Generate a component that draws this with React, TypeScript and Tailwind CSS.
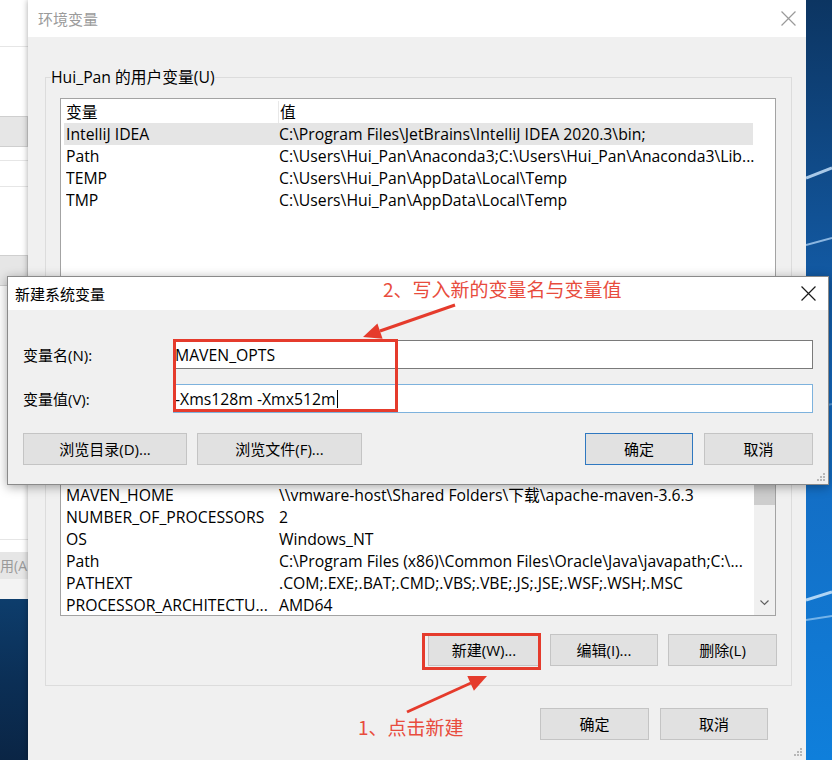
import React from 'react';

const userVars: [string, string][] = [
  ['IntelliJ IDEA', 'C:\\Program Files\\JetBrains\\IntelliJ IDEA 2020.3\\bin;'],
  ['Path', 'C:\\Users\\Hui_Pan\\Anaconda3;C:\\Users\\Hui_Pan\\Anaconda3\\Lib...'],
  ['TEMP', 'C:\\Users\\Hui_Pan\\AppData\\Local\\Temp'],
  ['TMP', 'C:\\Users\\Hui_Pan\\AppData\\Local\\Temp'],
];

const sysVars: [string, string][] = [
  ['ComSpec', 'C:\\Windows\\system32\\cmd.exe'],
  ['DriverData', 'C:\\Windows\\System32\\Drivers\\DriverData'],
  ['JAVA_HOME', 'C:\\Program Files\\Java\\jdk1.8.0_271'],
  ['MAVEN_HOME', '\\\\vmware-host\\Shared Folders\\下载\\apache-maven-3.6.3'],
  ['NUMBER_OF_PROCESSORS', '2'],
  ['OS', 'Windows_NT'],
  ['Path', 'C:\\Program Files (x86)\\Common Files\\Oracle\\Java\\javapath;C:\\...'],
  ['PATHEXT', '.COM;.EXE;.BAT;.CMD;.VBS;.VBE;.JS;.JSE;.WSF;.WSH;.MSC'],
  ['PROCESSOR_ARCHITECTU...', 'AMD64'],
];

function WinButton({ label, w, primary }: { label: string; w: string; primary?: boolean }) {
  return (
    <div
      className={`flex h-[32px] ${w} items-center justify-center whitespace-nowrap border bg-[#e1e1e1] text-[15px] text-black ${
        primary ? 'border-[#2f78c0]' : 'border-[#c4c4c4]'
      }`}
    >
      {label}
    </div>
  );
}

function Grip() {
  return (
    <svg width="10" height="10" viewBox="0 0 10 10" className="text-[#b8b8b8]">
      <rect x="8" y="2" width="2" height="2" fill="currentColor" />
      <rect x="5" y="5" width="2" height="2" fill="currentColor" />
      <rect x="8" y="5" width="2" height="2" fill="currentColor" />
      <rect x="2" y="8" width="2" height="2" fill="currentColor" />
      <rect x="5" y="8" width="2" height="2" fill="currentColor" />
      <rect x="8" y="8" width="2" height="2" fill="currentColor" />
    </svg>
  );
}

function CloseX({ color, size }: { color: string; size: number }) {
  return (
    <svg width={size} height={size} viewBox="0 0 14 14">
      <path d="M0.5 0.5 L13.5 13.5 M13.5 0.5 L0.5 13.5" stroke={color} strokeWidth="1.1" />
    </svg>
  );
}

function VarRow({ name, value, selected }: { name: string; value: string; selected?: boolean }) {
  return (
    <div
      className={`ml-[3px] flex h-[22px] w-[689px] items-center whitespace-nowrap pl-[2px] ${
        selected ? 'bg-[#e5e5e5]' : ''
      }`}
    >
      <div className="w-[213px] shrink-0 overflow-hidden">{name}</div>
      <div>{value}</div>
    </div>
  );
}

function ListHeader() {
  return (
    <div className="ml-[3px] flex h-[22px] w-[689px] items-center pl-[2px]">
      <div className="w-[212px] shrink-0">变量</div>
      <div className="h-full border-l border-[#e8e8e8] pl-[1px] leading-[22px]">值</div>
    </div>
  );
}

export default function App() {
  return (
    <div className="relative flex h-[760px] w-[832px] overflow-hidden font-['Open_Sans','Noto_Sans_CJK_SC',sans-serif] text-[15.75px] leading-[22px] text-black">
      {/* window behind, left strip */}
      <div className="flex w-[28px] shrink-0 flex-col bg-white text-[#9a9a9a]">
        <div className="h-[47px] border-b border-[#e6e6e6]" />
        <div className="h-[69px]" />
        <div className="h-[31px] border border-l-0 border-[#cfcfcf] bg-[#e6e6e6]" />
        <div className="h-[14px] border-b border-[#e6e6e6]" />
        <div className="h-[26px] border-b border-[#e6e6e6]" />
        <div className="h-[68px]" />
        <div className="h-[31px] border border-l-0 border-[#cfcfcf] bg-[#e6e6e6]" />
        <div className="h-[254px] border-b border-[#e6e6e6]" />
        <div className="h-[12px]" />
        <div className="flex h-[27px] items-center overflow-hidden whitespace-nowrap bg-[#e6e6e6] text-[14px]">
          用(A
        </div>
        <div className="h-[20px] bg-[#f3f3f3]" />
        <div className="flex-1 bg-gradient-to-b from-[#0d3d6c] via-[#0b2f56] to-[#0a2545]" />
      </div>

      {/* 环境变量 window */}
      <div className="relative flex w-[778px] shrink-0 flex-col bg-[#f0f0f0] shadow-[0_0_6px_rgba(0,0,0,0.35)]">
        <div className="flex h-[37px] shrink-0 items-center justify-between bg-white pl-[10px] pr-[10px]">
          <span className="text-[15px] text-[#9b9b9b]">环境变量</span>
          <CloseX color="#9a9a9a" size={15} />
        </div>

        <div className="flex flex-col pl-[17px] pt-[30px]">
          <fieldset className="w-[747px] border border-[#dcdcdc]">
            <legend className="ml-[5px] leading-[20px]">Hui_Pan 的用户变量(U)</legend>
            <div className="px-[14px] pb-[12px] pt-[11px]">
              <div className="h-[190px] w-[716px] border border-[#a3a3a3] bg-white pt-[2px]">
                <ListHeader />
                {userVars.map(([n, v], i) => (
                  <VarRow key={n} name={n} value={v} selected={i === 0} />
                ))}
              </div>
              <div className="mt-[12px] flex justify-end gap-[10px]">
                <WinButton label="新建(N)..." w="w-[112px]" />
                <WinButton label="编辑(E)..." w="w-[108px]" />
                <WinButton label="删除(D)" w="w-[109px]" />
              </div>
            </div>
          </fieldset>

          <fieldset className="mt-[16px] w-[747px] border border-[#dcdcdc]">
            <legend className="ml-[5px] leading-[20px]">系统变量(S)</legend>
            <div className="px-[14px] pb-[19px] pt-[11px]">
              <div className="flex h-[224px] w-[716px] border border-[#a3a3a3] bg-white">
                <div className="flex-1 overflow-hidden pt-[3px]">
                  <ListHeader />
                  {sysVars.map(([n, v]) => (
                    <VarRow key={n} name={n} value={v} />
                  ))}
                </div>
                <div className="flex w-[21px] flex-col bg-[#f0f0f0]">
                  <div className="h-[17px]" />
                  <div className="h-[95px] bg-[#cdcdcd]" />
                  <div className="flex-1" />
                  <div className="flex h-[24px] items-center justify-center">
                    <svg width="9" height="6" viewBox="0 0 9 6">
                      <path d="M0.5 0.5 L4.5 4.5 L8.5 0.5" fill="none" stroke="#606060" strokeWidth="1.2" />
                    </svg>
                  </div>
                </div>
              </div>
              <div className="mt-[18px] flex justify-end gap-[10px]">
                <WinButton label="新建(W)..." w="w-[112px]" />
                <WinButton label="编辑(I)..." w="w-[108px]" />
                <WinButton label="删除(L)" w="w-[109px]" />
              </div>
            </div>
          </fieldset>

          <div className="mt-[22px] flex w-[723px] justify-end gap-[11px]">
            <WinButton label="确定" w="w-[109px]" />
            <WinButton label="取消" w="w-[108px]" />
          </div>
        </div>
        <div className="mt-auto flex justify-end pb-[4px] pr-[4px]">
          <Grip />
        </div>
      </div>

      {/* desktop wallpaper */}
      <div className="relative w-[26px] shrink-0 bg-gradient-to-b from-[#0c3562] via-[#1468bd] to-[#0f7fdb]">
        <svg width="26" height="760" viewBox="0 0 26 760" className="absolute inset-0">
          <path d="M0 178 L26 168" stroke="#cfe8ff" strokeWidth="3" opacity="0.8" />
          <path d="M0 245 L26 238" stroke="#bfe0ff" strokeWidth="2" opacity="0.7" />
          <path d="M0 410 L26 404" stroke="#9ccff7" strokeWidth="2" opacity="0.5" />
          <path d="M0 600 L26 592" stroke="#d8eeff" strokeWidth="3" opacity="0.8" />
          <path d="M0 620 L26 616" stroke="#b6dcfb" strokeWidth="2" opacity="0.6" />
        </svg>
      </div>

      {/* 新建系统变量 dialog */}
      <div className="absolute left-[7px] top-[276px] flex h-[209px] w-[822px] flex-col border border-[#8a8a8a] bg-[#f0f0f0] shadow-[0_2px_10px_rgba(0,0,0,0.35)]">
        <div className="flex h-[33px] shrink-0 items-center justify-between bg-white pl-[7px] pr-[12px]">
          <span className="text-[15px]">新建系统变量</span>
          <CloseX color="#1a1a1a" size={15} />
        </div>
        <div className="flex flex-col px-[15px] pt-[30px]">
          <div className="flex items-center">
            <div className="w-[150px] shrink-0 text-[15px]">变量名(N):</div>
            <div className="flex h-[29px] flex-1 items-center border border-[#7a7a7a] bg-white pl-[1px]">
              MAVEN_OPTS
            </div>
          </div>
          <div className="mt-[15px] flex items-center">
            <div className="w-[150px] shrink-0 text-[15px]">变量值(V):</div>
            <div className="flex h-[29px] flex-1 items-center border border-[#7db2dd] bg-white pl-[1px]">
              -Xms128m -Xmx512m
              <span className="ml-[1px] h-[18px] w-px bg-black" />
            </div>
          </div>
          <div className="mt-[20px] flex items-center">
            <WinButton label="浏览目录(D)..." w="w-[164px]" />
            <div className="w-[10px]" />
            <WinButton label="浏览文件(F)..." w="w-[165px]" />
            <div className="flex-1" />
            <WinButton label="确定" w="w-[108px]" primary />
            <div className="w-[11px]" />
            <WinButton label="取消" w="w-[109px]" />
          </div>
        </div>
        <div className="mt-auto flex justify-end pb-[3px] pr-[3px]">
          <Grip />
        </div>
      </div>

      {/* annotations */}
      <div className="absolute left-[173px] top-[339px] h-[73px] w-[225px] border-[3px] border-[#e53b2c]" />
      <div className="absolute left-[422px] top-[633px] h-[37px] w-[119px] border-[3px] border-[#e53b2c]" />
      <div className="absolute left-[383px] top-[277px] whitespace-nowrap font-['Noto_Sans_CJK_SC',sans-serif] text-[19px] leading-[24px] text-[#e84c3d]">
        2、写入新的变量名与变量值
      </div>
      <div className="absolute left-[358px] top-[714px] whitespace-nowrap font-['Noto_Sans_CJK_SC',sans-serif] text-[19px] leading-[26px] text-[#e84c3d]">
        1、点击新建
      </div>
      <svg width="832" height="760" viewBox="0 0 832 760" className="pointer-events-none absolute left-0 top-0">
        <path d="M455 305 L380 331" stroke="#e53b2c" strokeWidth="3" />
        <polygon points="363,337 377.4,323.5 382.6,338.7" fill="#e53b2c" />
        <path d="M407 712 L471 683" stroke="#e53b2c" strokeWidth="3" />
        <polygon points="487,676 473.9,690.7 467.3,676.1" fill="#e53b2c" />
      </svg>
    </div>
  );
}
